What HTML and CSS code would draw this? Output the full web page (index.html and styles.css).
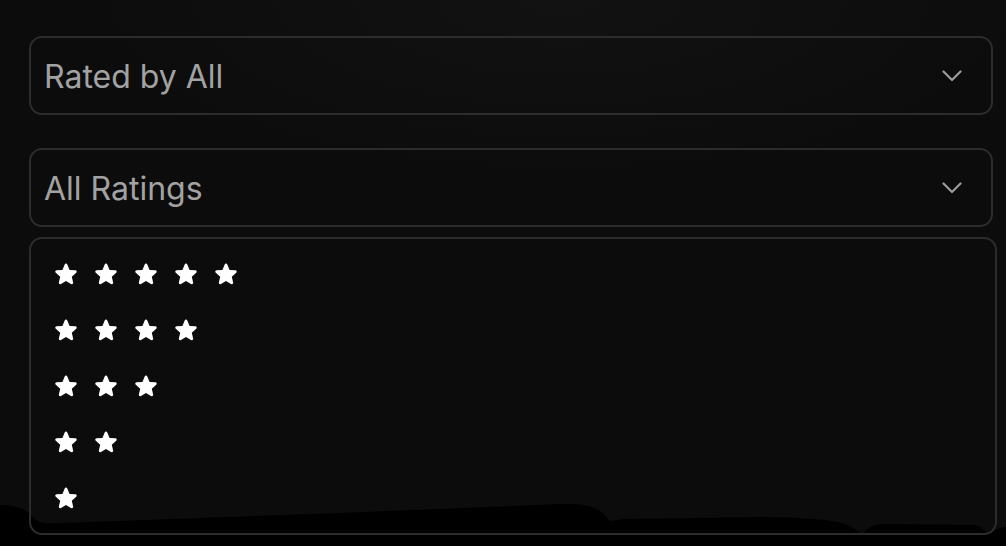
FILE: index.html
```html
<!DOCTYPE html>
<html lang="en">
<head>
<meta charset="utf-8">
<title>Ratings filter</title>
<link rel="stylesheet" href="styles.css">
</head>
<body>
<svg class="shadow-blob" viewBox="0 0 1006 546" preserveAspectRatio="none" aria-hidden="true">
  <path d="M0,505 C20,505 26,510 35,519 C42,525 50,523 62,523 L340,513 L560,504 C590,503 600,508 610,521 L623,519 L766,517 C800,518 830,519 845,524 C855,528 860,533 863,534 C868,527 875,524 883,524 L976,525 C982,527 985,532 988,534 L999,528 L1006,527 L1006,546 L0,546 Z" fill="#000"/>
</svg>
<main class="panel">
  <div class="select">
    <span class="select-label">Rated by All</span>
    <svg class="chevron" viewBox="0 0 20 12"><polyline points="1.5,1.5 10,10 18.5,1.5"/></svg>
  </div>
  <div class="select select-second">
    <span class="select-label">All Ratings</span>
    <svg class="chevron" viewBox="0 0 20 12"><polyline points="1.5,1.5 10,10 18.5,1.5"/></svg>
  </div>
  <ul class="menu">
    <li class="menu-row"><svg class="star" viewBox="0 0 24 24"><use href="#star"/></svg><svg class="star" viewBox="0 0 24 24"><use href="#star"/></svg><svg class="star" viewBox="0 0 24 24"><use href="#star"/></svg><svg class="star" viewBox="0 0 24 24"><use href="#star"/></svg><svg class="star" viewBox="0 0 24 24"><use href="#star"/></svg></li>
    <li class="menu-row"><svg class="star" viewBox="0 0 24 24"><use href="#star"/></svg><svg class="star" viewBox="0 0 24 24"><use href="#star"/></svg><svg class="star" viewBox="0 0 24 24"><use href="#star"/></svg><svg class="star" viewBox="0 0 24 24"><use href="#star"/></svg></li>
    <li class="menu-row"><svg class="star" viewBox="0 0 24 24"><use href="#star"/></svg><svg class="star" viewBox="0 0 24 24"><use href="#star"/></svg><svg class="star" viewBox="0 0 24 24"><use href="#star"/></svg></li>
    <li class="menu-row"><svg class="star" viewBox="0 0 24 24"><use href="#star"/></svg><svg class="star" viewBox="0 0 24 24"><use href="#star"/></svg></li>
    <li class="menu-row"><svg class="star" viewBox="0 0 24 24"><use href="#star"/></svg></li>
  </ul>
</main>
<svg width="0" height="0" class="defs">
  <defs>
    <path id="star" fill="#fff" d="M10.788 3.21c.448-1.077 1.976-1.077 2.424 0l2.082 5.006 5.404.434c1.164.093 1.636 1.545.749 2.305l-4.117 3.527 1.257 5.273c.271 1.136-.964 2.033-1.960 1.425L12 18.354 7.373 21.18c-.996.608-2.231-.29-1.960-1.425l1.257-5.273-4.117-3.527c-.887-.76-.415-2.212.749-2.305l5.404-.434 2.082-5.005Z"/>
  </defs>
</svg>
</body>
</html>
```

FILE: styles.css
```css
* { box-sizing: border-box; }

html, body {
  margin: 0;
  width: 1006px;
  height: 546px;
  overflow: hidden;
}

body {
  background: radial-gradient(ellipse 700px 260px at 560px 0px, #121212 0%, #0c0c0c 70%), #0c0c0c;
  font-family: "Inter", "Liberation Sans", sans-serif;
  position: relative;
}

.defs { position: absolute; }

.shadow-blob {
  position: absolute;
  left: 0;
  top: 0;
  width: 1006px;
  height: 546px;
  z-index: 0;
}

.panel {
  position: relative;
  z-index: 1;
  padding: 36px 9px 0 29px;
  display: flex;
  flex-direction: column;
}

.select {
  width: 964px;
  height: 79px;
  border: 2px solid #2c2c2c;
  border-radius: 13px;
  display: flex;
  align-items: center;
  justify-content: space-between;
  padding: 0 29px 0 13px;
}

.select-second {
  margin-top: 33px;
}

.select-label {
  color: #a2a2a2;
  font-size: 32px;
  font-weight: 400;
  padding-top: 1px;
}

.chevron {
  width: 20px;
  height: 12px;
  fill: none;
  stroke: #9c9c9c;
  stroke-width: 2.2;
  stroke-linecap: round;
  stroke-linejoin: round;
}

.menu {
  list-style: none;
  margin: 10px 0 0 0;
  width: 968px;
  height: 298px;
  border: 2px solid #2c2c2c;
  border-radius: 13px;
  padding: 7px 0 0 22px;
}

.menu-row {
  height: 56px;
  display: flex;
  align-items: center;
  gap: 14px;
}

.star {
  width: 26px;
  height: 26px;
  display: block;
}
```
